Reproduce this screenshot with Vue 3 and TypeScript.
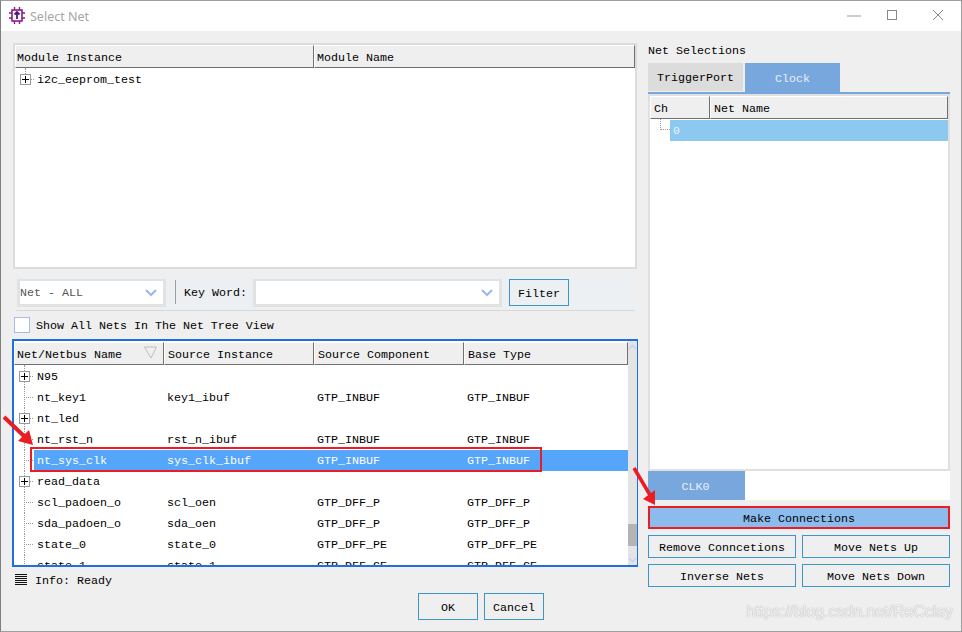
<script setup lang="ts">
interface NetRow { name: string; src: string; comp: string; base: string; expandable?: boolean; selected?: boolean }
const rows: NetRow[] = [
  { name: 'N95', src: '', comp: '', base: '', expandable: true },
  { name: 'nt_key1', src: 'key1_ibuf', comp: 'GTP_INBUF', base: 'GTP_INBUF' },
  { name: 'nt_led', src: '', comp: '', base: '', expandable: true },
  { name: 'nt_rst_n', src: 'rst_n_ibuf', comp: 'GTP_INBUF', base: 'GTP_INBUF' },
  { name: 'nt_sys_clk', src: 'sys_clk_ibuf', comp: 'GTP_INBUF', base: 'GTP_INBUF', selected: true },
  { name: 'read_data', src: '', comp: '', base: '', expandable: true },
  { name: 'scl_padoen_o', src: 'scl_oen', comp: 'GTP_DFF_P', base: 'GTP_DFF_P' },
  { name: 'sda_padoen_o', src: 'sda_oen', comp: 'GTP_DFF_P', base: 'GTP_DFF_P' },
  { name: 'state_0', src: 'state_0', comp: 'GTP_DFF_PE', base: 'GTP_DFF_PE' },
  { name: 'state_1', src: 'state_1', comp: 'GTP_DFF_CE', base: 'GTP_DFF_CE' },
]
const actions: string[] = ['Remove Conncetions', 'Move Nets Up', 'Inverse Nets', 'Move Nets Down']
</script>

<template>
  <div class="window">
    <header class="titlebar">
      <svg class="appicon" width="16" height="17" viewBox="0 0 16 17" fill="none">
        <rect x="3" y="3" width="10" height="11" fill="#fff" stroke="#8a1a8e" stroke-width="1.6" />
        <path d="M0 6h3M0 11h3M13 6h3M13 11h3M5.5 0v3M10.500 0v3M5.500 14v3M10.500 14v3" stroke="#8a1a8e" stroke-width="1.400" />
        <path d="M8 12V5.500M5.500 7.500L8 5l2.500 2.500" stroke="#4a1a6e" stroke-width="1.800" />
      </svg>
      <span class="title">Select Net</span>
      <div class="winbtns">
        <svg width="14" height="14" viewBox="0 0 14 14"><path d="M0 8h14" stroke="#999" /></svg>
        <svg width="14" height="14" viewBox="0 0 14 14"><rect x="2.500" y="2.500" width="9" height="9" fill="none" stroke="#888" /></svg>
        <svg width="14" height="14" viewBox="0 0 14 14"><path d="M2 2l10 10M12 2L2 12" stroke="#888" /></svg>
      </div>
    </header>

    <div class="content">
      <main class="left">
        <section class="module-table">
          <div class="thead">
            <div class="th mod-a">Module Instance</div>
            <div class="th mod-b">Module Name</div>
          </div>
          <div class="mod-row">
            <span class="twig first"><i class="plus"></i></span>
            <span>i2c_eeprom_test</span>
          </div>
        </section>

        <section class="filterbar">
          <div class="combo net-combo">
            <span class="combo-text">Net - ALL</span>
            <svg width="12" height="8" viewBox="0 0 12 8"><path d="M1 1l5 5 5-5" fill="none" stroke="#9bb4f5" stroke-width="2" /></svg>
          </div>
          <div class="sep"></div>
          <label class="kw">Key Word:</label>
          <div class="combo kw-combo">
            <svg width="12" height="8" viewBox="0 0 12 8"><path d="M1 1l5 5 5-5" fill="none" stroke="#9bb4f5" stroke-width="2" /></svg>
          </div>
          <button class="btn filter">Filter</button>
        </section>

        <div class="showall">
          <span class="check"></span>
          <span class="showall-text">Show All Nets In The Net Tree View</span>
        </div>

        <section class="net-table">
          <div class="net-main">
            <div class="thead net-head">
              <div class="th c1">Net/Netbus Name
                <svg class="sort" width="13" height="13" viewBox="0 0 13 13"><path d="M.5 1h12L7 12z" fill="none" stroke="#bdbdbd" /></svg>
              </div>
              <div class="th c2">Source Instance</div>
              <div class="th c3">Source Component</div>
              <div class="th c4">Base Type</div>
            </div>
            <div class="net-body">
              <div v-for="r in rows" :key="r.name" class="net-row">
                <div class="cell c1 name">
                  <span class="twig"><i v-if="r.expandable" class="plus"></i></span>
                  <span :class="['nm', { sel: r.selected }]">{{ r.name }}</span>
                </div>
                <div :class="['rest', { sel: r.selected }]">
                  <div class="cell c2">{{ r.src }}</div>
                  <div class="cell c3">{{ r.comp }}</div>
                  <div class="cell c4">{{ r.base }}</div>
                </div>
              </div>
            </div>
          </div>
          <div class="scrollbar">
            <svg width="9" height="6" viewBox="0 0 9 6"><path d="M1 5l3.500-3.500L8 5" fill="none" stroke="#c4d2f2" stroke-width="1.500" /></svg>
            <div class="thumb"></div>
            <svg width="9" height="6" viewBox="0 0 9 6"><path d="M1 1l3.500 3.500L8 1" fill="none" stroke="#c4d2f2" stroke-width="1.500" /></svg>
          </div>
        </section>

        <div class="info">
          <span class="lines"></span>
          <span class="info-text">Info: Ready</span>
        </div>

        <div class="dialog-btns">
          <button class="btn dlg">OK</button>
          <button class="btn dlg">Cancel</button>
        </div>
      </main>

      <aside class="right">
        <div class="sel-label">Net Selections</div>
        <div class="tabs">
          <div class="tab trig">TriggerPort</div>
          <div class="tab clock">Clock</div>
        </div>
        <div class="sel-panel">
          <div class="thead sel-head">
            <div class="th ch">Ch</div>
            <div class="th nn">Net Name</div>
          </div>
          <div class="sel-row">
            <span class="hook"></span>
            <span class="sel-val">0</span>
          </div>
        </div>
        <div class="clk-strip"><div class="clk-tab">CLK0</div></div>
        <button class="make">Make Connections</button>
        <div class="action-grid">
          <button v-for="a in actions" :key="a" class="btn act">{{ a }}</button>
        </div>
      </aside>
    </div>

    <div class="redbox"></div>
    <svg class="arrows" width="962" height="632" viewBox="0 0 962 632">
      <path d="M4 417L25 437" stroke="#ea1c24" stroke-width="4" />
      <path d="M33 445L18 441 29 430z" fill="#ea1c24" />
      <path d="M634 468L650 495" stroke="#ea1c24" stroke-width="3.500" />
      <path d="M655 505L643 499 655 490z" fill="#ea1c24" />
    </svg>
    <span class="watermark">https://blog.csdn.net/ReCclay</span>
  </div>
</template>

<style>
html, body { margin: 0; padding: 0; }
</style>

<style scoped>
.window {
  position: relative; width: 962px; height: 632px; box-sizing: border-box;
  border: 1px solid #a0a0a0; border-left-color: #808080; background: #efefef; overflow: hidden;
  font-family: "Liberation Mono", monospace; font-size: 11.67px; color: #000;
  display: flex; flex-direction: column;
}
.titlebar { height: 30px; flex: none; background: #fff; display: flex; align-items: center; padding-left: 8px; }
.appicon { margin-right: 5px; margin-top: -1px; }
.title { font-family: "Noto Sans", sans-serif; font-size: 12.500px; color: #a6a6a6; }
.winbtns { margin-left: auto; display: flex; gap: 32px; margin-right: 16px; margin-top: -2px; }
.winbtns svg:first-child { margin-right: -8px; }

.content { flex: 1; display: flex; min-height: 0; }
.left { width: 637px; flex: none; box-sizing: border-box; padding: 12px 0 0 12px; display: flex; flex-direction: column; }
.right { flex: 1; box-sizing: border-box; padding: 12px 11px 0 10px; display: flex; flex-direction: column; }

.module-table { width: 624px; height: 226px; flex: none; box-sizing: border-box; border: 2px solid #dcdcdc; background: #fff; }
.thead { display: flex; height: 23px; box-sizing: border-box; }
.th {
  box-sizing: border-box; background: #efefef; border: 1px solid; border-color: #fff #707070 #707070 #fff;
  display: flex; align-items: center; padding: 2px 0 0 1px; position: relative; white-space: nowrap;
}
.mod-a { width: 299px; }
.mod-b { flex: 1; padding-left: 2px; }
.mod-row { display: flex; align-items: center; height: 21px; margin-top: 1px; }

.twig { position: relative; display: block; width: 23px; height: 21px; flex: none; }
.twig::before { content: ""; position: absolute; left: 10px; top: -1px; bottom: 0; border-left: 1px dotted #999; }
.twig::after { content: ""; position: absolute; left: 10px; width: 9px; top: 10px; border-top: 1px dotted #999; }
.twig.first::before { bottom: 10px; }
.plus {
  position: absolute; z-index: 1; left: 5px; top: 5px; width: 11px; height: 11px; box-sizing: border-box;
  border: 1px solid #9a9a9a; background:
    linear-gradient(#000, #000) center / 7px 1px no-repeat,
    linear-gradient(#000, #000) center / 1px 7px no-repeat, #fff;
}
.mod-row .twig { width: 22px; }

.filterbar {
  width: 619px; height: 36px; flex: none; box-sizing: border-box; margin: 6px 0 0 3px; background: #ecf0f2;
  border-bottom: 1px solid #d8d8d8; display: flex; align-items: flex-start; padding: 4px 0 0 1px;
}
.combo {
  box-sizing: border-box; height: 28px; background: #fff; border: 3px solid #e2e2e2; border-top-width: 2px;
  display: flex; align-items: center; justify-content: flex-end; padding-right: 6px;
}
.net-combo { width: 149px; }
.combo-text { margin-right: auto; padding: 1px 0 0 0; color: #555; }
.sep { width: 1px; height: 24px; margin: 1px 8px 0 9px; background: #9e9e9e; }
.kw { line-height: 29px; width: 69px; flex: none; }
.kw-combo { width: 249px; }
.btn {
  box-sizing: border-box; background: #efefef; border: 1px solid #3c97c8; padding: 2px 0 0; margin: 0;
  font: inherit; color: inherit; border-radius: 0;
}
.filter { width: 60px; height: 27px; margin-left: 7px; background: #ecf0f2; }

.showall { display: flex; align-items: center; gap: 6px; height: 16px; margin: 6px 0 0 1px; flex: none; }
.showall-text { padding-top: 2px; }
.check { width: 16px; height: 16px; box-sizing: border-box; border: 1px solid #a4bdf0; background: #fff; }

.net-table {
  width: 626px; height: 228px; flex: none; box-sizing: border-box; margin: 6px 0 0 -1px;
  border: 2px solid #1f6fe0; background: #fff; display: flex;
}
.net-main { width: 614px; flex: none; display: flex; flex-direction: column; min-height: 0; padding-top: 1px; box-sizing: border-box; }
.c1 { width: 150px; flex: none; }
.c2, .c3 { width: 150px; flex: none; }
.c4 { flex: 1; min-width: 0; }
.net-head .th.c1 { padding-left: 2px; }
.net-head .th.c2 { padding-left: 3px; }
.net-head .th.c3 { padding-left: 3px; }
.net-head .th.c4 { padding-left: 3px; }
.sort { position: absolute; right: 6px; top: 3px; }
.net-body { flex: 1; min-height: 0; overflow: hidden; padding-top: 1px; }
.net-row { display: flex; height: 21px; }
.cell { display: flex; align-items: center; box-sizing: border-box; white-space: nowrap; height: 21px; }
.name { width: 150px; }
.nm { flex: 1; height: 21px; display: flex; align-items: center; margin-left: -3px; padding-left: 3px; }
.rest { flex: 1; display: flex; }
.rest .c2 { padding-left: 3px; }
.rest .c3 { padding-left: 3px; }
.rest .c4 { padding-left: 3px; }
.sel { background: #55a5fb; color: #fff; }

.scrollbar { flex: 1; background: #e4e4e4; display: flex; flex-direction: column; align-items: center; padding-top: 3px; box-sizing: border-box; }
.thumb { width: 100%; height: 22px; margin-top: 174px; background: #b4b4b4; }
.scrollbar svg:last-child { margin-top: 11px; }

.info { display: flex; align-items: center; gap: 8px; height: 16px; margin: 5px 0 0 2px; flex: none; }
.info-text { padding-top: 2px; }
.lines {
  width: 12px; height: 12px; flex: none;
  background: repeating-linear-gradient(#111 0 1px, transparent 1px 2px);
}
.dialog-btns { display: flex; gap: 6px; justify-content: center; margin: 5px 0 0 405px; width: 126px; flex: none; }
.dlg { width: 60px; height: 27px; }

.sel-label { height: 14px; line-height: 16px; margin-bottom: 6px; flex: none; }
.tabs { display: flex; gap: 2px; height: 31px; box-sizing: border-box; border-bottom: 2px solid #78a7dd; flex: none; }
.tab { width: 95px; display: flex; align-items: center; justify-content: center; padding-top: 2px; box-sizing: border-box; }
.trig { height: 28px; background: #dcdcdc; }
.clock { height: 29px; background: #78a7dd; color: #e6f0fb; }
.sel-panel {
  width: 302px; height: 377px; box-sizing: border-box; flex: none; background: #fff;
  border: 2px solid #e0e0e0;
}
.sel-head { height: 23px; margin-bottom: 1px; }
.ch { width: 60px; padding-left: 3px; }
.nn { flex: 1; padding-left: 3px; }
.sel-row { display: flex; height: 21px; position: relative; padding-left: 20px; }
.hook { position: absolute; left: 10px; top: -1px; width: 10px; height: 11px; box-sizing: border-box; border-left: 1px dotted #999; border-bottom: 1px dotted #999; }
.sel-val { flex: 1; background: #8cc8f0; color: #e8f4fc; line-height: 23px; padding-left: 3px; }
.clk-strip { height: 29px; width: 302px; background: #fff; flex: none; }
.clk-tab { width: 97px; height: 29px; background: #78a7dd; color: #e6f0fb; display: flex; align-items: center; justify-content: center; padding: 2px 2px 0 0; box-sizing: border-box; }
.make {
  width: 302px; height: 23px; margin-top: 6px; flex: none; box-sizing: border-box; border: 2px solid #ea1c24; background: #8cbcee;
  font: inherit; color: inherit; padding: 2px 0 0;
}
.action-grid { display: grid; grid-template-columns: 148px 148px; gap: 6px; margin-top: 6px; width: 302px; }
.act { height: 23px; }

.redbox { position: absolute; left: 29px; top: 446px; width: 512px; height: 25px; box-sizing: border-box; border: 2px solid #ea1c24; pointer-events: none; }
.arrows { position: absolute; left: -1px; top: -1px; pointer-events: none; }
.watermark { position: absolute; right: 8px; top: 602px; font-family: "Liberation Sans", sans-serif; font-size: 15.9px; color: rgba(255,255,255,.85); text-shadow: 0 0 1px rgba(110,110,110,.7); white-space: nowrap; }
</style>
